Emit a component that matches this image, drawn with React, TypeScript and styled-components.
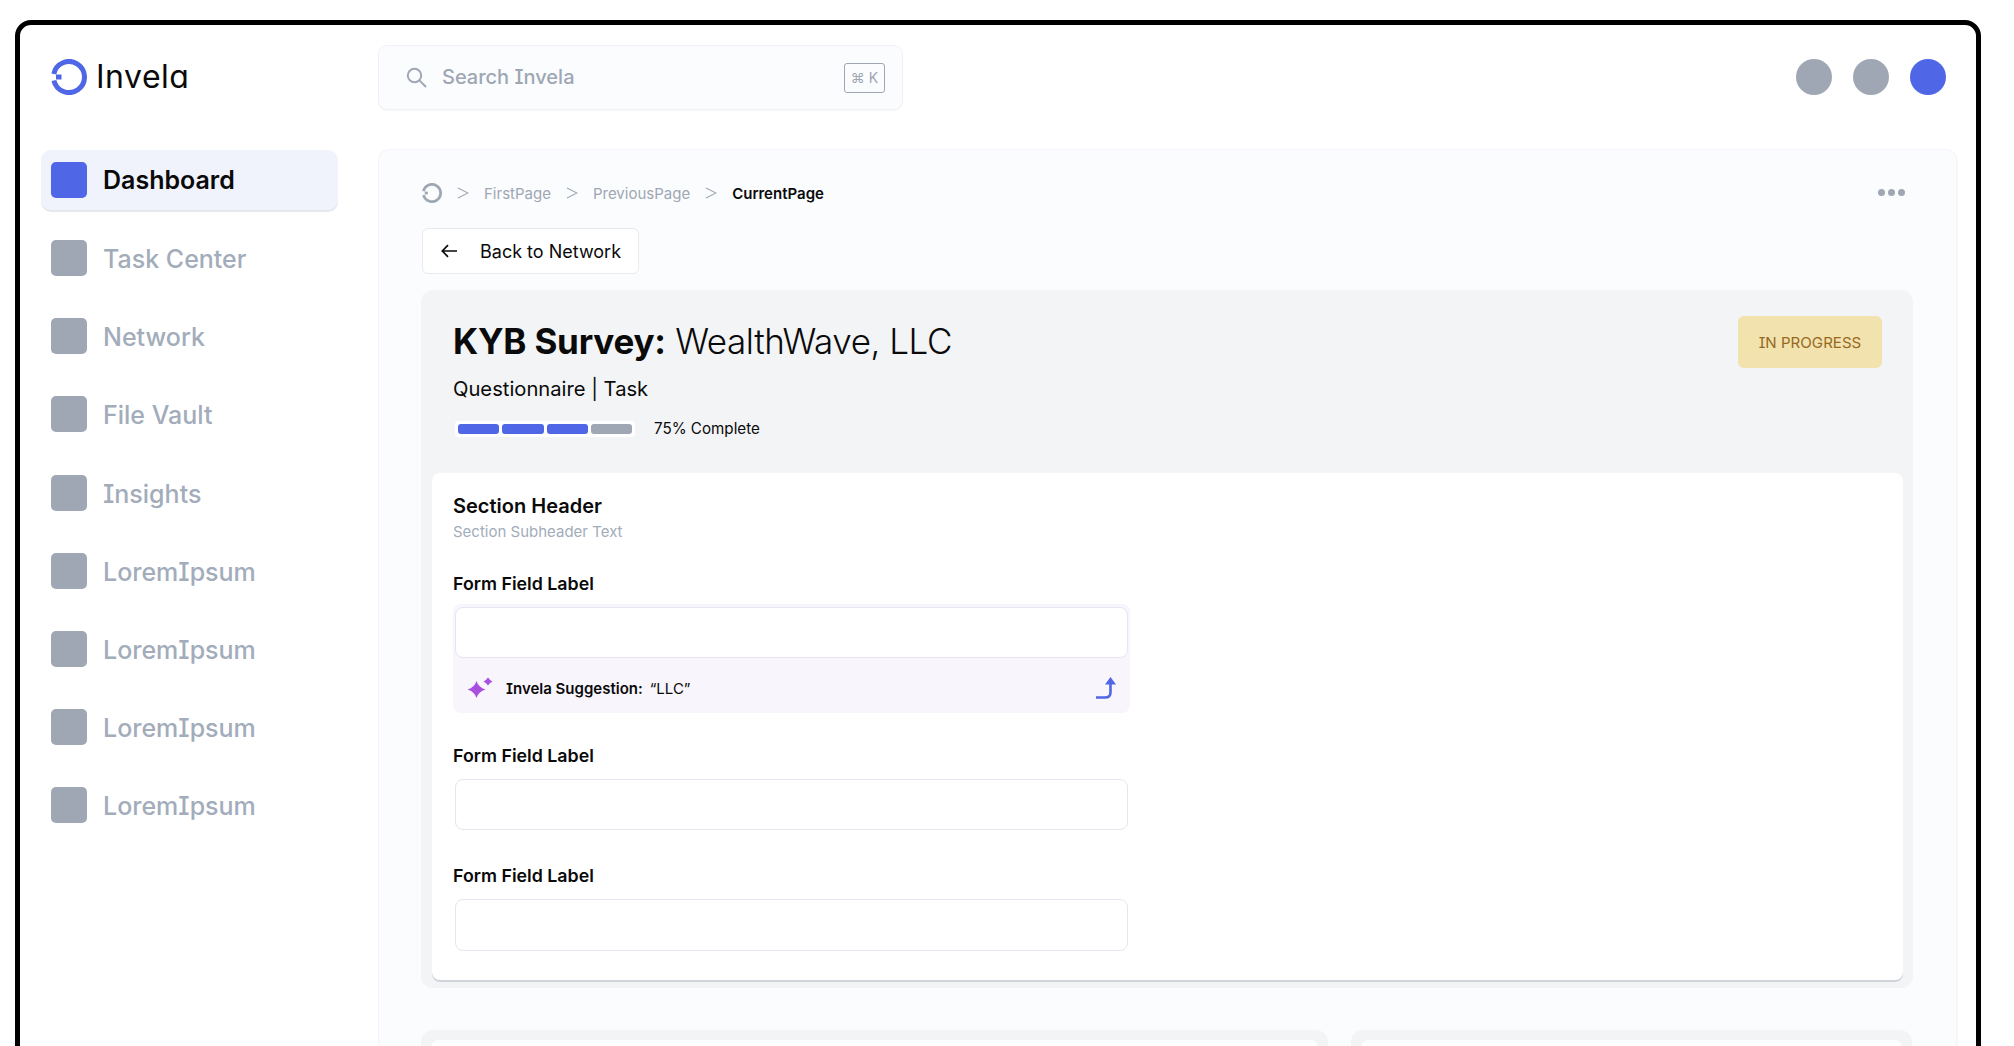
import React from "react";
import styled, { createGlobalStyle } from "styled-components";

const BLUE = "#4f66e6";
const GREY = "#9ea7b3";
const FONT = `"Inter", "Liberation Sans", sans-serif`;

const GlobalStyle = createGlobalStyle`
  html, body {
    margin: 0;
    height: 1046px;
    overflow: hidden;
    background: #fff;
  }
  body {
    font-family: ${FONT};
    font-feature-settings: "cv08";
    color: #0a0a0a;
  }
  * { box-sizing: border-box; }
`;

const NAV_ITEMS = [
  "Dashboard",
  "Task Center",
  "Network",
  "File Vault",
  "Insights",
  "LoremIpsum",
  "LoremIpsum",
  "LoremIpsum",
  "LoremIpsum",
];

const LogoMark = ({ size, color }: { size: number; color: string }) => (
  <svg width={size} height={size} viewBox="0 0 36 36" fill="none">
    <path d="M2.800 15A15.500 15.500 0 1 1 2.900 21.500" stroke={color} strokeWidth="5" />
    <rect x="5" y="15.500" width="5.500" height="5" fill={color} />
  </svg>
);

const SearchIcon = () => (
  <svg width="21" height="21" viewBox="0 0 21 21" fill="none" stroke={GREY} strokeWidth="2">
    <circle cx="8.500" cy="8.500" r="6.700" />
    <path d="M13.400 13.400 20 20" />
  </svg>
);

const Chevron = () => (
  <svg width="12" height="12" viewBox="0 0 12 12" fill="none" stroke={GREY} strokeWidth="1.100">
    <path d="M1 1l10 5-10 5" />
  </svg>
);

const BackArrow = () => (
  <svg width="16" height="14" viewBox="0 0 16 14" fill="none" stroke="#0a0a0a" strokeWidth="1.700">
    <path d="M16 7H1.500M7 1.200 1.300 7 7 12.800" />
  </svg>
);

const Sparkle = () => (
  <svg width="26" height="24" viewBox="0 0 26 24" fill="#a94fe0">
    <path d="M9.500 5Q11.500 11.500 18.500 13.500Q11.500 15.500 9.500 22Q7.500 15.500 .5 13.500Q7.500 11.500 9.500 5z" />
    <path d="M21 1.500Q22.500 4 25.500 5.500Q22.500 7 21 9.500Q19.500 7 16.500 5.500Q19.500 4 21 1.500z" />
  </svg>
);

const ApplyArrow = () => (
  <svg width="22" height="22" viewBox="0 0 22 22" fill="none">
    <path d="M1 20.500h9c3.500 0 5.500-1.500 5.500-5V6" stroke={BLUE} strokeWidth="2.600" />
    <path d="M15.500 0l5.500 7.500H10z" fill={BLUE} />
  </svg>
);

const App = () => (
  <>
    <GlobalStyle />
    <DeviceFrame>
      <LogoCell>
        <LogoMark size={36} color={BLUE} />
        <LogoText>Invela</LogoText>
      </LogoCell>

      <TopBar>
        <SearchBox>
          <SearchIcon />
          <SearchText>Search Invela</SearchText>
          <Shortcut>⌘ K</Shortcut>
        </SearchBox>
        <Avatars>
          <Avatar />
          <Avatar />
          <Avatar $active />
        </Avatars>
      </TopBar>

      <Sidebar>
        {NAV_ITEMS.map((label, i) => (
          <NavItem key={i} $active={i === 0}>
            <NavIcon $active={i === 0} />
            <span>{label}</span>
          </NavItem>
        ))}
      </Sidebar>

      <Main>
        <BreadcrumbRow>
          <Breadcrumbs>
            <LogoMark size={20} color={GREY} />
            <Chevron />
            <Crumb>FirstPage</Crumb>
            <Chevron />
            <Crumb>PreviousPage</Crumb>
            <Chevron />
            <Crumb $current>CurrentPage</Crumb>
          </Breadcrumbs>
          <MoreDots>
            <i />
            <i />
            <i />
          </MoreDots>
        </BreadcrumbRow>

        <BackButton>
          <BackArrow />
          Back to Network
        </BackButton>

        <SurveyCard>
          <SurveyHeader>
            <div>
              <Title>
                <b>KYB Survey:</b> WealthWave, LLC
              </Title>
              <Subtitle>Questionnaire | Task</Subtitle>
              <ProgressRow>
                <ProgressTrack>
                  <ProgressSegment $done />
                  <ProgressSegment $done />
                  <ProgressSegment $done />
                  <ProgressSegment />
                </ProgressTrack>
                <ProgressLabel>75% Complete</ProgressLabel>
              </ProgressRow>
            </div>
            <StatusBadge>IN PROGRESS</StatusBadge>
          </SurveyHeader>

          <FormPanel>
            <SectionHeader>Section Header</SectionHeader>
            <SectionSub>Section Subheader Text</SectionSub>

            <FieldLabel $gap={30}>Form Field Label</FieldLabel>
            <SuggestionWrap>
              <SuggestedInput />
              <SuggestionRow>
                <Sparkle />
                <SuggestionText>
                  <b>Invela Suggestion:</b>“LLC”
                </SuggestionText>
                <ApplyArrow />
              </SuggestionRow>
            </SuggestionWrap>

            <FieldLabel $gap={31}>Form Field Label</FieldLabel>
            <PlainInput />

            <FieldLabel $gap={34}>Form Field Label</FieldLabel>
            <PlainInput $tall />
          </FormPanel>
        </SurveyCard>

        <BottomCards>
          <BottomCard>
            <BottomInner />
          </BottomCard>
          <BottomCard>
            <BottomInner />
          </BottomCard>
        </BottomCards>
      </Main>
    </DeviceFrame>
  </>
);

export default App;

const DeviceFrame = styled.div`
  margin: 20px 0 0 15px;
  width: 1966px;
  height: 1200px;
  border: 5px solid #000;
  border-radius: 16px;
  background: #fff;
  display: grid;
  grid-template-columns: 359px 1fr;
  grid-template-rows: 125px 1fr;
`;

const LogoCell = styled.div`
  display: flex;
  align-items: center;
  gap: 9px;
  height: 36px;
  margin-top: 34px;
  padding-left: 31px;
`;

/* Inter's single-storey "a" is the nearest installed match for the wordmark */
const LogoText = styled.span`
  font-size: 32px;
  line-height: 36px;
  font-weight: 400;
  font-feature-settings: "cv11";
  letter-spacing: 0.5px;
  color: #0a0a0a;
`;

const TopBar = styled.div`
  display: flex;
  justify-content: space-between;
  align-items: flex-start;
  padding: 21px 30px 0 0;
`;

const SearchBox = styled.div`
  width: 523px;
  height: 63px;
  display: flex;
  align-items: center;
  padding: 0 17px 0 27px;
  background: #fbfcfe;
  border-radius: 8px;
  box-shadow: 0 0 0 1px #f0f1f4, 0 1px 2px #e9ebef;
`;

const SearchText = styled.span`
  flex: 1;
  margin: 0 0 2px 15px;
  font-size: 20px;
  font-weight: 500;
  color: ${GREY};
`;

const Shortcut = styled.span`
  width: 41px;
  height: 30px;
  display: flex;
  align-items: center;
  justify-content: center;
  border: 1.5px solid ${GREY};
  border-radius: 3px;
  font-size: 14px;
  color: ${GREY};
`;

const Avatars = styled.div`
  display: flex;
  gap: 21px;
  margin-top: 13px;
`;

const Avatar = styled.div<{ $active?: boolean }>`
  width: 36px;
  height: 36px;
  border-radius: 50%;
  background: ${({ $active }) => ($active ? BLUE : GREY)};
`;

const Sidebar = styled.nav`
  display: flex;
  flex-direction: column;
  gap: 18.130px;
  padding-left: 21px;
  width: 318px;
`;

const NavItem = styled.div<{ $active?: boolean }>`
  height: 60px;
  display: flex;
  align-items: center;
  gap: 16px;
  padding-left: 10px;
  border-radius: 10px;
  font-size: 25px;
  font-weight: ${({ $active }) => ($active ? 600 : 500)};
  color: ${({ $active }) => ($active ? "#0a0a0a" : "#a2acba")};
  background: ${({ $active }) => ($active ? "#f0f3fc" : "transparent")};
  box-shadow: ${({ $active }) => ($active ? "0 2px 0 #e6e8ee" : "none")};

  span {
    margin-top: ${({ $active }) => ($active ? 0 : 2)}px;
  }
`;

const NavIcon = styled.div<{ $active?: boolean }>`
  width: 36px;
  height: 36px;
  border-radius: 5px;
  background: ${({ $active }) => ($active ? BLUE : GREY)};
`;

const Main = styled.main`
  width: 1577px;
  padding: 33px 43px 0 42px;
  background: #fbfcfe;
  border-radius: 10px 10px 0 0;
  box-shadow: 0 0 0 1px #f4f5f8, 1px 1px 2px #ebedf1;
`;

const BreadcrumbRow = styled.div`
  display: flex;
  justify-content: space-between;
  align-items: center;
  height: 20px;
  padding: 0 8px 0 1px;
`;

const Breadcrumbs = styled.div`
  display: flex;
  align-items: center;
  gap: 15px;
`;

const Crumb = styled.span<{ $current?: boolean }>`
  font-size: 15px;
  font-weight: ${({ $current }) => ($current ? 600 : 400)};
  color: ${({ $current }) => ($current ? "#0a0a0a" : GREY)};
`;

const MoreDots = styled.div`
  display: flex;
  gap: 3px;
  margin-top: -2px;
  i {
    width: 7px;
    height: 7px;
    border-radius: 50%;
    background: ${GREY};
  }
`;

const BackButton = styled.div`
  margin: 25px 0 0 1px;
  width: 217px;
  height: 46px;
  display: flex;
  align-items: center;
  gap: 23px;
  padding-left: 18px;
  background: #fff;
  border: 1px solid #e8eaef;
  border-radius: 6px;
  font-size: 18px;
  font-weight: 400;
`;

const SurveyCard = styled.section`
  margin-top: 16px;
  padding: 0 10px 8px 11px;
  background: #f3f4f6;
  border-radius: 12px;
`;

const SurveyHeader = styled.header`
  height: 183px;
  display: flex;
  justify-content: space-between;
  align-items: flex-start;
  padding: 25px 21px 0 21px;
`;

const Title = styled.h1`
  margin: 0;
  font-size: 35px;
  line-height: 52px;
  font-weight: 300;
  letter-spacing: -0.45px;
  b {
    font-weight: 700;
    letter-spacing: -0.2px;
  }
`;

const Subtitle = styled.div`
  margin-top: 9px;
  font-size: 20.200px;
  line-height: 26px;
`;

const ProgressRow = styled.div`
  display: flex;
  align-items: center;
  gap: 19px;
  margin-top: 17px;
  padding-left: 2px;
`;

const ProgressTrack = styled.div`
  display: flex;
  gap: 3px;
  padding: 3px;
  width: 180px;
  height: 16px;
  background: #fff;
  border-radius: 4px;
`;

const ProgressSegment = styled.div<{ $done?: boolean }>`
  flex: 1;
  border-radius: 3px;
  background: ${({ $done }) => ($done ? BLUE : GREY)};
`;

const ProgressLabel = styled.span`
  font-size: 15.200px;
  line-height: 20px;
`;

const StatusBadge = styled.div`
  width: 144px;
  height: 52px;
  margin-top: 1px;
  display: flex;
  align-items: center;
  justify-content: center;
  background: #f2e2ae;
  border-radius: 6px;
  font-size: 15.100px;
  color: #96691f;
`;

const FormPanel = styled.div`
  height: 507px;
  padding: 19px 21px 0;
  background: #fff;
  border-radius: 8px;
  box-shadow: 0 2px 0 #cfd4db;
`;

const SectionHeader = styled.h2`
  margin: 0;
  font-size: 20px;
  line-height: 28px;
  font-weight: 600;
`;

const SectionSub = styled.div`
  margin-top: 2px;
  font-size: 15px;
  line-height: 20px;
  color: #a2acba;
`;

const FieldLabel = styled.label<{ $gap?: number }>`
  display: block;
  margin-top: ${({ $gap }) => $gap ?? 29}px;
  font-size: 17.800px;
  line-height: 24px;
  font-weight: 600;
`;

const SuggestionWrap = styled.div`
  margin-top: 8px;
  width: 677px;
  height: 109px;
  padding: 3px 2px 0;
  background: #f8f5fc;
  border-radius: 8px;
`;

const SuggestedInput = styled.div`
  height: 51px;
  background: #fff;
  border: 1px solid #e6e6f1;
  border-radius: 8px;
`;

const SuggestionRow = styled.div`
  height: 55px;
  display: flex;
  align-items: center;
  padding: 5px 11px 0 12px;
`;

const SuggestionText = styled.span`
  flex: 1;
  margin-left: 13px;
  font-size: 15px;
  b {
    font-weight: 600;
    margin-right: 7px;
  }
`;

const PlainInput = styled.div<{ $tall?: boolean }>`
  margin: 11px 0 0 2px;
  width: 673px;
  height: ${({ $tall }) => ($tall ? 52 : 51)}px;
  background: #fff;
  border: 1px solid #e2e6ee;
  border-radius: 8px;
`;

const BottomCards = styled.div`
  display: grid;
  grid-template-columns: 907px 561px;
  gap: 23px;
  margin-top: 42px;
`;

const BottomCard = styled.div`
  height: 200px;
  padding: 10px;
  background: #f3f4f6;
  border-radius: 12px;
`;

const BottomInner = styled.div`
  height: 100%;
  background: #fff;
  border-radius: 8px;
`;
